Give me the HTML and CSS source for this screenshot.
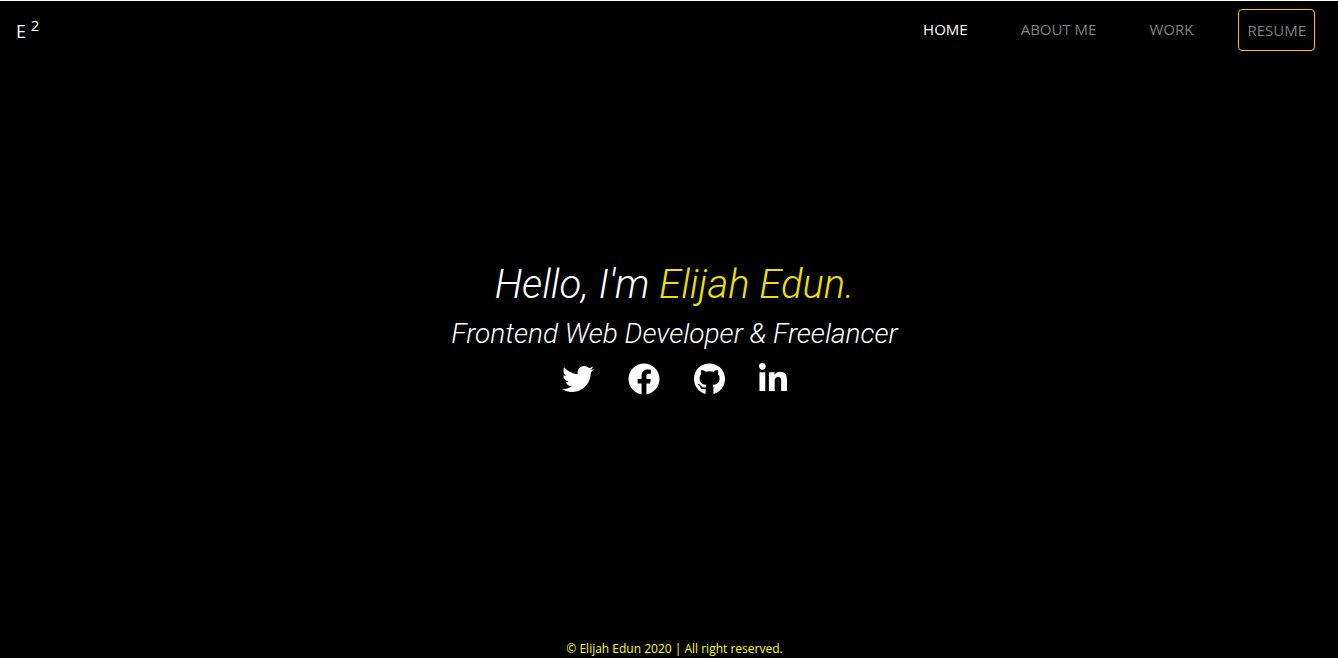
FILE: index.html
```html
<!DOCTYPE html>
<html lang="en">
<head>
<meta charset="utf-8">
<meta name="viewport" content="width=device-width, initial-scale=1">
<title>Elijah Edun</title>
<link rel="stylesheet" href="styles.css">
</head>
<body>
<header class="navbar">
  <a class="brand" href="#">E <sup class="brand-power">2</sup></a>
  <nav class="nav-links">
    <a class="nav-link active" href="#home">HOME</a>
    <a class="nav-link" href="#about">ABOUT ME</a>
    <a class="nav-link" href="#work">WORK</a>
    <a class="nav-link resume" href="#resume">RESUME</a>
  </nav>
</header>
<main class="hero" id="home">
  <h1 class="title">Hello, I'm <span class="name">Elijah Edun.</span></h1>
  <h2 class="subtitle">Frontend Web Developer &amp; Freelancer</h2>
  <div class="social">
    <a class="social-link" href="#twitter" aria-label="Twitter"><svg class="icon" viewBox="0 0 512 512"><path d="M459.37 151.716c.325 4.548.325 9.097.325 13.645 0 138.72-105.583 298.558-298.558 298.558-59.452 0-114.68-17.219-161.137-47.106 8.447.974 16.568 1.299 25.34 1.299 49.055 0 94.213-16.568 130.274-44.832-46.132-.975-84.792-31.188-98.112-72.772 6.498.974 12.995 1.624 19.818 1.624 9.421 0 18.843-1.3 27.614-3.573-48.081-9.747-84.143-51.98-84.143-102.985v-1.299c13.969 7.797 30.214 12.67 47.431 13.319-28.264-18.843-46.781-51.005-46.781-87.391 0-19.492 5.197-37.36 14.294-52.954 51.655 63.675 129.3 105.258 216.365 109.807-1.624-7.797-2.599-15.918-2.599-24.04 0-57.828 46.782-104.934 104.934-104.934 30.213 0 57.502 12.67 76.67 33.137 23.715-4.548 46.456-13.32 66.599-25.34-7.798 24.366-24.366 44.833-46.132 57.827 21.117-2.273 41.584-8.122 60.426-16.243-14.292 20.791-32.161 39.308-52.628 54.253z"/></svg></a>
    <a class="social-link" href="#facebook" aria-label="Facebook"><svg class="icon" viewBox="0 0 512 512"><path d="M504 256C504 119 393 8 256 8S8 119 8 256c0 123.780 90.690 226.380 209.250 245V327.690h-63V256h63v-54.640c0-62.150 37-96.480 93.670-96.480 27.140 0 55.520 4.840 55.520 4.840v61h-31.280c-30.800 0-40.410 19.120-40.410 38.730V256h68.780l-11 71.690h-57.780V501C413.310 482.380 504 379.780 504 256z"/></svg></a>
    <a class="social-link" href="#github" aria-label="GitHub"><svg class="icon icon-round" viewBox="0 0 496 512"><path d="M165.900 397.400c0 2-2.300 3.600-5.200 3.600-3.300.3-5.600-1.300-5.600-3.600 0-2 2.300-3.600 5.200-3.600 3-.3 5.600 1.300 5.600 3.600zm-31.100-4.500c-.7 2 1.300 4.300 4.300 4.900 2.600 1 5.600 0 6.200-2s-1.300-4.300-4.300-5.200c-2.600-.7-5.500.3-6.200 2.300zm44.200-1.700c-2.900.7-4.900 2.600-4.600 4.900.3 2 2.900 3.300 5.900 2.600 2.900-.7 4.900-2.600 4.600-4.600-.3-1.900-3-3.200-5.900-2.900zM244.800 8C106.100 8 0 113.300 0 252c0 110.900 69.800 205.800 169.500 239.200 12.800 2.300 17.300-5.600 17.300-12.100 0-6.200-.3-40.400-.3-61.400 0 0-70 15-84.700-29.800 0 0-11.400-29.100-27.800-36.600 0 0-22.900-15.700 1.600-15.400 0 0 24.900 2 38.600 25.800 21.900 38.600 58.600 27.500 72.900 20.900 2.300-16 8.800-27.100 16-33.700-55.900-6.200-112.300-14.300-112.300-110.500 0-27.500 7.600-41.300 23.600-58.900-2.600-6.500-11.100-33.300 2.600-67.900 20.900-6.500 69 27 69 27 20-5.600 41.500-8.500 62.800-8.500s42.800 2.900 62.800 8.500c0 0 48.100-33.600 69-27 13.700 34.700 5.200 61.400 2.600 67.900 16 17.700 25.800 31.500 25.800 58.900 0 96.500-58.900 104.200-114.800 110.500 9.200 7.900 17 22.900 17 46.400 0 33.700-.3 75.400-.3 83.600 0 6.500 4.600 14.400 17.300 12.100C428.200 457.800 496 362.900 496 252 496 113.300 383.500 8 244.800 8zM97.200 352.900c-1.300 1-1 3.300.7 5.200 1.600 1.600 3.900 2.300 5.200 1 1.300-1 1-3.300-.7-5.200-1.600-1.600-3.900-2.300-5.200-1zm-10.800-8.100c-.7 1.300.3 2.900 2.300 3.900 1.600 1 3.600.7 4.300-.7.7-1.300-.3-2.900-2.300-3.900-2-.6-3.600-.3-4.300.7zm32.400 35.600c-1.600 1.300-1 4.300 1.300 6.200 2.300 2.300 5.200 2.600 6.500 1 1.300-1.300.7-4.300-1.300-6.200-2.200-2.300-5.200-2.600-6.500-1zm-11.400-14.700c-1.600 1-1.600 3.600 0 5.900 1.600 2.300 4.300 3.300 5.600 2.300 1.600-1.300 1.600-3.900 0-6.200-1.400-2.300-4-3.300-5.600-2z"/></svg></a>
    <a class="social-link" href="#linkedin" aria-label="LinkedIn"><svg class="icon icon-narrow" viewBox="0 0 448 512"><path d="M100.280 448H7.400V148.900h92.880zM53.790 108.100C24.090 108.100 0 83.500 0 53.800a53.790 53.790 0 0 1 107.580 0c0 29.700-24.100 54.300-53.790 54.300zM447.900 448h-92.680V302.400c0-34.700-.7-79.200-48.290-79.200-48.290 0-55.690 37.700-55.690 76.700V448h-92.780V148.900h89.080v40.800h1.300c12.400-23.500 42.690-48.300 87.880-48.300 94 0 111.280 61.900 111.280 142.300V448z"/></svg></a>
  </div>
</main>
<footer class="footer">© Elijah Edun 2020 | All right reserved.</footer>
</body>
</html>
```
FILE: styles.css
```css
* {
  box-sizing: border-box;
}

body {
  margin: 0;
  min-height: 100vh;
  display: flex;
  flex-direction: column;
  border-top: 1px solid #fff;
  border-bottom: 1px solid #fff;
  background: #000;
  color: #fff;
  font-family: "Segoe UI", "Open Sans", sans-serif;
}

a {
  color: inherit;
  text-decoration: none;
}

.navbar {
  display: flex;
  justify-content: space-between;
  align-items: flex-start;
  padding: 8px 23px 8px 16px;
}

.brand {
  padding-top: 8px;
  font-size: 18px;
  line-height: 28px;
}

.brand-power {
  font-size: 15px;
  line-height: 0;
}

.nav-links {
  display: flex;
  align-items: flex-start;
  gap: 37px;
}

.nav-link {
  padding: 8px;
  font-size: 15px;
  line-height: 24px;
  color: #7f7f7f;
}

.nav-link.active {
  color: #fff;
}

.nav-link.resume {
  border: 1px solid #ffc107;
  border-radius: 4px;
}

.hero {
  flex: 1;
  display: flex;
  flex-direction: column;
  align-items: center;
  justify-content: center;
  padding: 0 0 44px 11px;
  text-align: center;
}

.title,
.subtitle {
  margin: 0;
  font-family: Roboto, sans-serif;
  font-style: italic;
  font-weight: 300;
}

.title {
  margin-bottom: 8px;
  font-size: 40px;
  line-height: 48px;
}

.name {
  color: #f0e000;
}

.subtitle {
  margin-bottom: 12px;
  font-size: 28px;
  line-height: 34px;
}

.social {
  display: flex;
  gap: 34px;
}

.social-link {
  display: flex;
}

.icon {
  width: 32px;
  height: 32px;
  fill: currentColor;
}

.icon-round {
  width: 31px;
}

.icon-narrow {
  width: 28px;
}

.footer {
  padding-left: 11px;
  font-size: 12px;
  line-height: 18px;
  text-align: center;
  color: #ff0;
}
```
